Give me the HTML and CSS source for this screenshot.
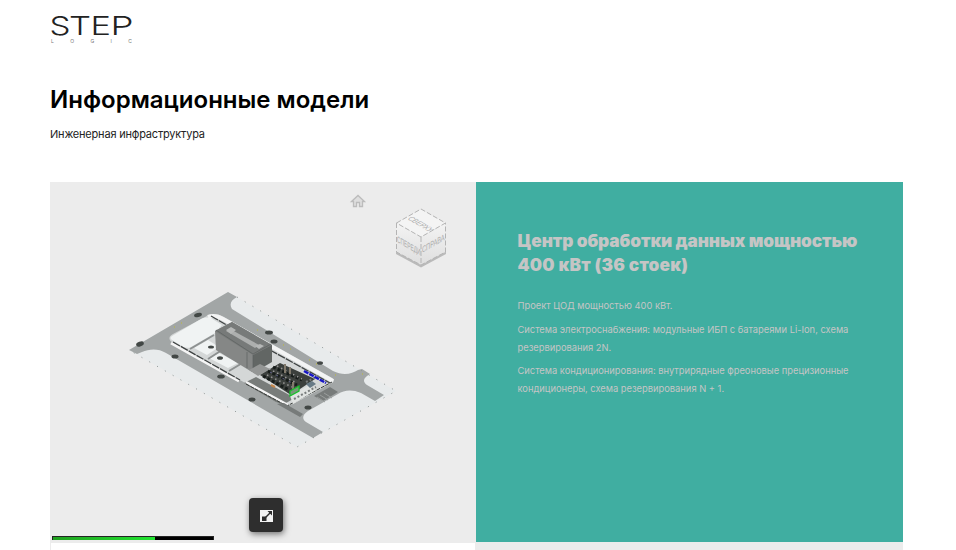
FILE: index.html
```html
<!DOCTYPE html>
<html lang="ru">
<head>
<meta charset="utf-8">
<title>Информационные модели</title>
<link rel="stylesheet" href="styles.css">
</head>
<body>
<header class="brand">
  <svg class="brand-name" width="86" height="23" viewBox="50 15 86 23"><text y="35"><tspan x="49.500" textLength="21" lengthAdjust="spacingAndGlyphs">S</tspan><tspan x="69" textLength="22" lengthAdjust="spacingAndGlyphs">T</tspan><tspan x="90.500" textLength="20.500" lengthAdjust="spacingAndGlyphs">E</tspan><tspan x="110.500" textLength="23" lengthAdjust="spacingAndGlyphs">P</tspan></text></svg>
  <div class="brand-sub"><span>L</span><span>O</span><span>G</span><span>I</span><span>C</span></div>
</header>
<main>
  <h1>Информационные модели</h1>
  <p class="lead">Инженерная инфраструктура</p>
  <section class="project">
    <div class="viewer">
      <svg class="scene" width="426" height="361" viewBox="50 182 426 361">
        <defs>
          <linearGradient id="cubeFace" x1="0" y1="0" x2="0" y2="1"><stop offset="0" stop-color="#f3f3f3"/><stop offset="1" stop-color="#dedede"/></linearGradient>
        </defs>
        <!-- home button -->
        <path d="M351.500 201.500l6.500-6 6.500 6h-2v5h-3v-4h-3v4h-3v-5z" fill="#dedede" stroke="#bcbcbc" stroke-width="1.300"/>
        <!-- view cube -->
        <path d="M396 251l25 13.500 25-13.500v3l-25 13.500-25-13.500z" fill="#bababa"/>
        <path d="M396.500 223l24.500-14 24.500 14-24.500 14z" fill="#f4f4f4"/>
        <path d="M396.500 223l24.500 14v28l-24.500-13zM421 237l24.500-14v29l-24.500 13z" fill="url(#cubeFace)"/>
        <path d="M396.500 223l24.500-14 24.500 14-24.500 14zv29l24.500 13 24.500-13v-29M421 237v28" fill="none" stroke="#b4b4b4" stroke-dasharray="5 2"/>
        <g class="cube-label">
          <text transform="matrix(.87 .5 -.8 .45 407 219)" textLength="26" lengthAdjust="spacingAndGlyphs">СВЕРХУ</text>
          <text transform="matrix(.87 .5 0 1 397 242)" textLength="27" lengthAdjust="spacingAndGlyphs">СПЕРЕДИ</text>
          <text transform="matrix(.87 -.5 0 1 422 253)" textLength="26" lengthAdjust="spacingAndGlyphs">СПРАВА</text>
        </g>
        <!-- site: roads and lawns -->
        <path d="M228 292L396 391 297 447 129 350z" fill="#e8ebec"/>
        <path d="M228 292l9 5c-6 3-8 7-5 12l101 62c10 5 19 3 25-1l4-1 8 5-3 2c-4 3-4 6 0 9l17 10-9 6-14-8c-9-4-17-3-23 1l-30 17c-6 4-6 8-2 11l17 10-10 6-147-85c-8-5-17-4-24-1l-5 2-8-4z" fill="#a2a6a6"/>
        <path d="M237 297l159 94-99 56-168-97" fill="none" stroke="#8b9291" stroke-dasharray="1 8"/>
        <path d="M205 317c5-4 12-4 19 0l108 61c3 2 2 4 0 5l-39 21c-4 2-8 1-12-1l-109-61c-4-3-3-6 1-8z" fill="#d4d7d7"/>
        <path d="M172 336l29-17c5-2 9-2 13 1l8 5-7 8-24 14c-4 2-8 0-11-2l-8-5c-2-1-2-3 0-4zM194 348l14-8 11 7-12 8zM209 358l10-5 19 10-10 5z" fill="#f0f3f3"/>
        <path d="M208 317c6-2 10-1 15 2l110 62" fill="none" stroke="#f3f4f4" stroke-width="4"/>
        <path d="M171 343l68 38" fill="none" stroke="#f5f5f5" stroke-width="3"/>
        <path d="M173 342l67 38M211 316l19 11M270 350l60 33" fill="none" stroke="#3f4343" stroke-width="1.300" stroke-dasharray="8 1"/>
        <path d="M190 349l24-14M208 359l14-9M229 371l15-9" stroke="#8d9191" stroke-width="2"/>
        <!-- technical building -->
        <path d="M215 331l17-9 40 23v16l-20 11-36-22z" fill="#858786"/>
        <path d="M215 331l17-9 40 23-19 10z" fill="#777a79"/>
        <path d="M253 355l19-10v17l-19 11z" fill="#626664"/>
        <path d="M230 329l29 16-4 3-29-17z" fill="#adafae"/>
        <path d="M216 330l37 24 18-10M247 352v16M253 355v15" fill="none" stroke="#5c605e" stroke-width=".7"/>
        <path d="M226 330l5-3 5 3-5 4zM255 346l5-2 4 2-5 3z" fill="#b6b8b7"/>
        <path d="M249 370l11-6 10 5-12 7z" fill="#949695"/>
        <!-- equipment hall -->
        <path d="M244 383l12-6 39 21-9 5c-4 2-7 0-10-1z" fill="#787c7a"/>
        <path d="M246 382l42 23" stroke="#f4f4f4" stroke-width="2.500"/>
        <path d="M246 384l41 22 45-24" fill="none" stroke="#363a37" stroke-dasharray="4 1"/>
        <path d="M260 375l20-12 35 16-24 16z" fill="#3c403d"/>
        <path d="M268 371l29 14M273 367l29 13M263 376l26 14" stroke="#171c1a" stroke-width="3" stroke-dasharray="3 2"/>
        <path d="M269 369l26 13M277 366l25 13M267 375l25 12" stroke="#9a9999" stroke-width="1.500" stroke-dasharray="1.500 3"/>
        <path d="M270 372l24 12" stroke="#65668e" stroke-dasharray="2 5"/>
        <path d="M285 364v9M290 367v7M293 382v7" stroke="#827a6c" stroke-width="2"/>
        <path d="M290 396l18-10 8 4-23 14z" fill="#e1e4e2"/>
        <path d="M294 399l22-12M306 382l14-7" stroke="#777b7b" stroke-width="2" stroke-dasharray="2 2"/>
        <path d="M304 371l22 12" stroke="#1716c7" stroke-width="2.500" stroke-dasharray="5 1"/>
        <path d="M306 384l6-3 4 3-6 4z" fill="#687b87"/>
        <path d="M290 391l9-5v5l-9 5z" fill="#789879" stroke="#18c22a" stroke-width="1.300"/>
        <path d="M271 385l4 2" stroke="#c58549" stroke-width="2"/>
        <path d="M314 396l16-9 8 5-15 9zM277 404l7-1 19 11-3 3z" fill="#777b7a"/>
        <path d="M317 397l8 5M320 395l8 5M324 393l8 5" stroke="#9a9e9d"/>
        <g fill="#424745">
          <ellipse cx="140" cy="344" rx="4" ry="2.300" transform="rotate(-20 140 344)"/><ellipse cx="198" cy="315" rx="4" ry="2" transform="rotate(-15 198 315)"/>
          <ellipse cx="175" cy="356.500" rx="3.500" ry="2"/><ellipse cx="211" cy="347" rx="3" ry="1.600"/><ellipse cx="220" cy="358" rx="3" ry="1.800"/>
          <ellipse cx="221" cy="376.500" rx="3.800" ry="2"/><ellipse cx="252" cy="399.500" rx="3.500" ry="2"/><ellipse cx="269" cy="332.500" rx="4" ry="2"/>
          <ellipse cx="274" cy="341.500" rx="3.500" ry="2"/><ellipse cx="320" cy="363" rx="3" ry="1.800"/><ellipse cx="308" cy="407.500" rx="3.500" ry="2"/>
        </g>
        <path d="M174 327h1M181 323h1M257 330h1M283 345h1M290 349h1M309 360h1M316 364h1M335 375h1M362 374h1" stroke="#bdbb35"/>
      </svg>
      <div class="progress"><div class="progress-value"></div></div>
      <button class="expand" aria-label="Развернуть">
        <svg width="13" height="12" viewBox="0 0 13 12"><path d="M0 0h13v12H0z" fill="#f3f3f3"/><path d="M2 6.500h4.500V11H2zM7.500 1H12v4.500z" fill="#2e2e2e"/><path d="M5.500 7.500l5-5" stroke="#2e2e2e" stroke-width="1.400"/></svg>
      </button>
    </div>
    <article class="details">
      <h2><span class="title-line">Центр обработки данных мощностью</span><br>400 кВт (36 стоек)</h2>
      <p>Проект ЦОД мощностью 400 кВт.</p>
      <p>Система электроснабжения: модульные ИБП с батареями Li-Ion, схема<br>резервирования 2N.</p>
      <p>Система кондиционирования: внутрирядные фреоновые прецизионные<br>кондиционеры, схема резервирования N + 1.</p>
    </article>
  </section>
  <section class="next-project"><div class="next-details"></div><div class="next-viewer"></div></section>
</main>
</body>
</html>
```
FILE: styles.css
```css
* { box-sizing: border-box; }
body { margin: 0; height: 550px; overflow: hidden; background: #fff; color: #000; font-family: Inter, "Liberation Sans", sans-serif; }
.brand { height: 50px; padding: 15px 0 0 50px; }
.brand-name { display: block; overflow: visible; }
.brand-name text { font-size: 26px; font-weight: 300; fill: #222; }
.brand-sub { display: flex; justify-content: space-between; width: 82px; padding-left: 1px; font-size: 5px; line-height: 6px; color: #777; }
main { width: 853px; margin-left: 50px; }
h1 { margin: 0; padding-top: 35px; height: 76px; font-size: 24px; line-height: 30px; font-weight: 600; white-space: nowrap; }
.lead { margin: 0; height: 56px; font-size: 11px; line-height: 16px; letter-spacing: -.2px; color: #222; }
.project { display: grid; grid-template-columns: 426px 427px; height: 361px; }
.viewer { position: relative; background: #ececec; }
.scene { display: block; }
.cube-label { font-family: "Liberation Sans", sans-serif; font-size: 9px; fill: #aaa; }
.progress { position: absolute; left: 2px; bottom: 3px; width: 162px; height: 4px; border: 1px solid #242424; border-bottom: 0; background: #000; }
.progress-value { width: 102px; height: 100%; background: linear-gradient(90deg, #20a020, #22e532); }
.expand { position: absolute; left: 199px; top: 316px; display: flex; align-items: center; justify-content: center; width: 34px; height: 34px; padding: 2px 0 0; border: 0; border-radius: 4px; background: #2e2e2e; box-shadow: 1px 2px 6px #0008; }
.details { height: 360px; padding: 47px 0 0 41.5px; background: #40aea1; color: #c5c5c5; white-space: nowrap; }
.details h2 { margin: 0 0 20px; font-size: 17.3px; line-height: 24px; font-weight: 900; letter-spacing: .22px; }
.title-line { letter-spacing: -.09px; }
.details p { margin: 0 0 6px; font-size: 9.33px; line-height: 17.8px; }
.next-project { display: grid; grid-template-columns: 425px 428px; height: 7px; }
.next-details { border-left: 1px solid #ececec; background: #fff; }
.next-viewer { margin-top: -1px; background: #ececec; }
```
